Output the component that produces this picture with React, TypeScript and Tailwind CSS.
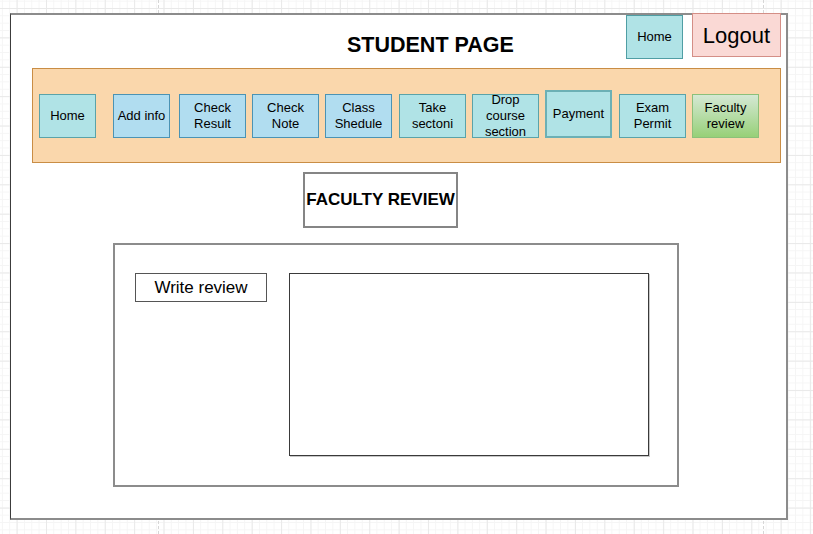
const navItems = [
  { label: 'Home', box: 'ml-[6px] w-[57px] h-[44px] bg-[#b0e3e6] border-[#5aa3a9]' },
  { label: 'Add info', box: 'ml-[17px] w-[57px] h-[44px] bg-[#b1ddf0] border-[#4b93b4]' },
  { label: 'Check Result', box: 'ml-[9px] w-[67px] h-[44px] bg-[#b1ddf0] border-[#4b93b4]' },
  { label: 'Check Note', box: 'ml-[6px] w-[67px] h-[44px] bg-[#b1ddf0] border-[#4b93b4]' },
  { label: 'Class Shedule', box: 'ml-[6px] w-[67px] h-[44px] bg-[#b1ddf0] border-[#4b93b4]' },
  { label: 'Take sectoni', box: 'ml-[7px] w-[67px] h-[44px] bg-[#b0e3e6] border-[#5aa3a9]' },
  { label: 'Drop course section', box: 'ml-[6px] w-[67px] h-[44px] bg-[#b0e3e6] border-[#5aa3a9]' },
  { label: 'Payment', box: 'ml-[6px] w-[67px] h-[48px] bg-[#b0e3e6] border-[#6cb0b5] border-2' },
  { label: 'Exam Permit', box: 'ml-[7px] w-[67px] h-[44px] bg-[#b0e3e6] border-[#5aa3a9]' },
  { label: 'Faculty review', box: 'ml-[6px] w-[67px] h-[44px] bg-gradient-to-b from-[#d5e8d4] to-[#97d077] border-[#8cc07a]' },
]

export default function App() {
  return (
    <div className="relative w-[813px] h-[534px] overflow-hidden bg-white bg-[linear-gradient(to_right,#e9e9e9_1px,transparent_1px),linear-gradient(to_bottom,#e9e9e9_1px,transparent_1px),linear-gradient(to_right,#f5f5f5_1px,transparent_1px),linear-gradient(to_bottom,#f5f5f5_1px,transparent_1px)] bg-[size:29.4px_29.4px,29.4px_29.4px,7.35px_7.35px,7.35px_7.35px] bg-[position:16.6px_8px] pl-[10px] pt-[13px] font-['Liberation_Sans',Arial,sans-serif] text-black">
      {/* page break lines */}
      <div className="absolute left-[158px] top-0 h-full border-l border-dashed border-[#d6d6d6]" />
      <div className="absolute left-[763px] top-0 h-full border-l border-dashed border-[#d6d6d6]" />

      <div className="relative w-[778px] h-[507px] bg-white border-2 border-l border-[#8c8c8c] border-l-[#3c3c3c]">
        {/* header */}
        <div className="flex items-start h-[44px]">
          <div className="ml-[336px] mt-[18px] text-[21.5px] leading-[24px] font-bold">STUDENT PAGE</div>
          <div className="ml-auto flex w-[57px] h-[44px] items-center justify-center border border-[#4f9ea4] bg-[#b0e3e6] text-[13px]">
            Home
          </div>
          <div className="ml-[9px] mr-[5px] -mt-[2px] flex w-[89px] h-[44px] items-center justify-center border border-[#d48e86] bg-[#fad9d5] text-[22px]">
            Logout
          </div>
        </div>

        {/* nav bar */}
        <div className="mt-[9px] ml-[21px] flex items-end w-[749px] h-[95px] pb-[24px] border border-[#c98d45] bg-[#fad7ac]">
          {navItems.map((item) => (
            <div
              key={item.label}
              className={`flex shrink-0 items-center justify-center border text-center text-[13px] leading-[16px] ${item.box}`}
            >
              {item.label}
            </div>
          ))}
        </div>

        {/* title box */}
        <div className="mt-[9px] ml-[292px] flex w-[155px] h-[56px] items-center justify-center border-2 border-[#858585] text-[17px] font-bold whitespace-nowrap">
          FACULTY REVIEW
        </div>

        {/* review panel */}
        <div className="mt-[15px] ml-[102px] flex items-start w-[566px] h-[244px] pl-[20px] pt-[28px] border-2 border-[#8c8c8c]">
          <div className="flex w-[132px] h-[29px] items-center justify-center border border-[#555] text-[17px]">
            Write review
          </div>
          <div className="ml-[22px] w-[360px] h-[183px] border border-[#3a3a3a] shadow-[1px_1px_0_#c8c8c8]" />
        </div>
      </div>
    </div>
  )
}
